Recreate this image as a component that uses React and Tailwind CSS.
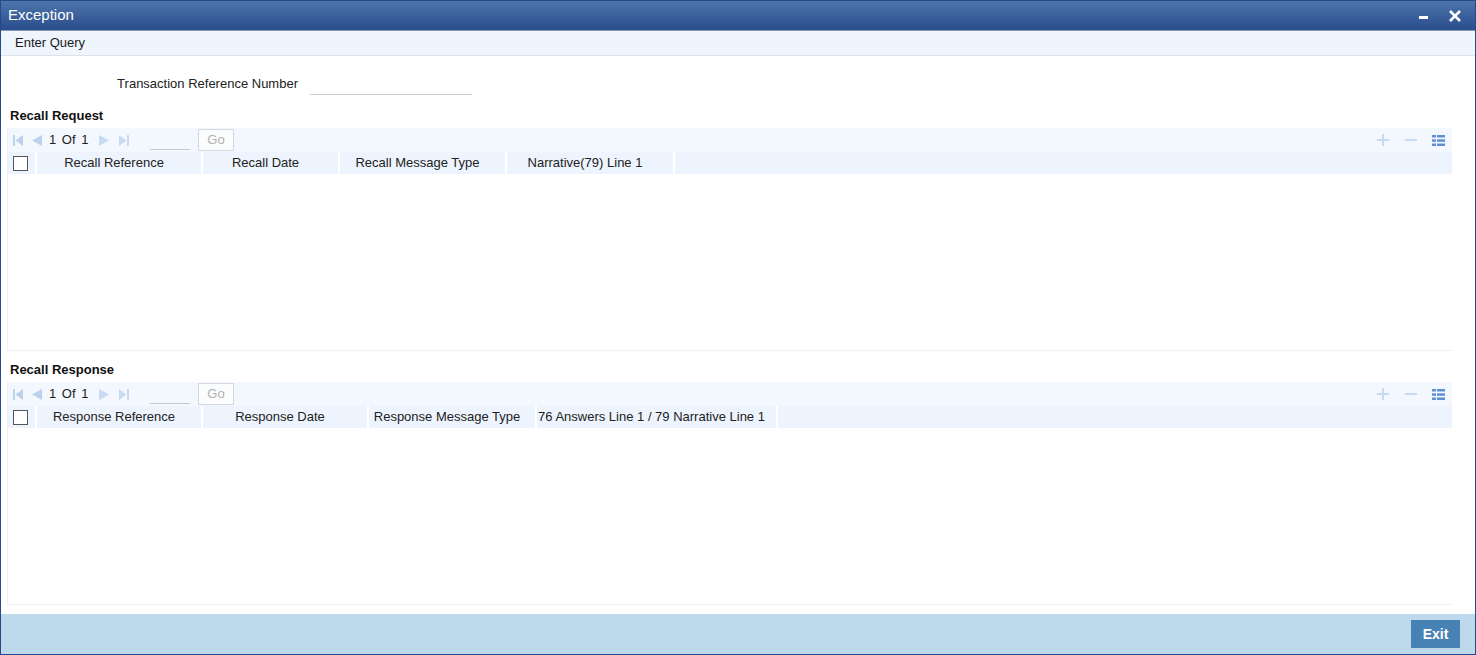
import React from "react";

const font = { fontFamily: '"Liberation Sans", Arial, sans-serif' };

function FirstIcon() {
  return (
    <svg width="10" height="11" viewBox="0 0 10 11">
      <rect x="0" y="0" width="2" height="11" fill="#bcd1ec" />
      <polygon points="10,0 2.5,5.5 10,11" fill="#bcd1ec" />
    </svg>
  );
}

function PrevIcon() {
  return (
    <svg width="10" height="11" viewBox="0 0 10 11">
      <polygon points="10,0 0,5.5 10,11" fill="#bcd1ec" />
    </svg>
  );
}

function NextIcon() {
  return (
    <svg width="10" height="11" viewBox="0 0 10 11">
      <polygon points="0,0 10,5.5 0,11" fill="#c8dbf2" />
    </svg>
  );
}

function LastIcon() {
  return (
    <svg width="10" height="11" viewBox="0 0 10 11">
      <polygon points="0,0 7.5,5.5 0,11" fill="#c8dbf2" />
      <rect x="8" y="0" width="2" height="11" fill="#c8dbf2" />
    </svg>
  );
}

function PlusIcon() {
  return (
    <svg width="12" height="12" viewBox="0 0 12 12">
      <rect x="0" y="5" width="12" height="2" fill="#c9dbf1" />
      <rect x="5" y="0" width="2" height="12" fill="#c9dbf1" />
    </svg>
  );
}

function MinusIcon() {
  return (
    <svg width="12" height="12" viewBox="0 0 12 12">
      <rect x="0" y="5" width="12" height="2" fill="#c9dbf1" />
    </svg>
  );
}

function ListIcon() {
  return (
    <svg width="13" height="11" viewBox="0 0 13 11">
      <rect x="0" y="0" width="4" height="2.5" fill="#5f8fd2" />
      <rect x="5" y="0" width="8" height="2.5" fill="#5f8fd2" />
      <rect x="0" y="4.3" width="4" height="2.5" fill="#5f8fd2" />
      <rect x="5" y="4.3" width="8" height="2.5" fill="#5f8fd2" />
      <rect x="0" y="8.5" width="4" height="2.5" fill="#5f8fd2" />
      <rect x="5" y="8.5" width="8" height="2.5" fill="#5f8fd2" />
    </svg>
  );
}

function Toolbar() {
  return (
    <div className="h-[24px] bg-[#f3f8fe] flex items-center text-[13px] text-[#222]">
      <div className="ml-[5px] w-[10px] flex"><FirstIcon /></div>
      <div className="ml-[9px] w-[10px] flex"><PrevIcon /></div>
      <span className="ml-[7px] w-[39px] whitespace-nowrap [word-spacing:2px]">1 Of 1</span>
      <div className="ml-[11px] w-[10px] flex"><NextIcon /></div>
      <div className="ml-[10px] w-[10px] flex"><LastIcon /></div>
      <div className="ml-[21px] w-[40px] h-[22px] border-b border-[#c8c8c8] self-start" />
      <div className="ml-[8px] w-[36px] h-[22px] border border-[#d4d8de] bg-[#fafcfe] text-[#b0b0b0] text-[13px] flex items-center justify-center self-start mt-[1px]">
        Go
      </div>
      <div className="ml-auto flex items-center">
        <div className="w-[12px] flex"><PlusIcon /></div>
        <div className="ml-[16px] w-[12px] flex"><MinusIcon /></div>
        <div className="ml-[15px] w-[13px] flex"><ListIcon /></div>
        <div className="w-[7px]" />
      </div>
    </div>
  );
}

function HeaderRow({ columns }) {
  return (
    <div className="h-[22px] bg-[#edf4fd] flex items-stretch text-[13px] text-[#222]">
      <div className="w-[29px] flex items-center pl-[5px] border-r-2 border-white">
        <div className="w-[15px] h-[15px] border border-[#555] bg-white" />
      </div>
      {columns.map((c) => (
        <div
          key={c.label}
          className="flex items-center justify-center pr-[10px] border-r-2 border-white whitespace-nowrap"
          style={{ width: c.width }}
        >
          {c.label}
        </div>
      ))}
    </div>
  );
}

function GridPanel({ columns }) {
  return (
    <div className="ml-[6px] w-[1445px] h-[223px] border-l border-b border-[#eef1f8]">
      <Toolbar />
      <HeaderRow columns={columns} />
    </div>
  );
}

export default function App() {
  const requestCols = [
    { label: "Recall Reference", width: 166 },
    { label: "Recall Date", width: 137 },
    { label: "Recall Message Type", width: 167 },
    { label: "Narrative(79) Line 1", width: 168 },
  ];
  const responseCols = [
    { label: "Response Reference", width: 166 },
    { label: "Response Date", width: 166 },
    { label: "Response Message Type", width: 168 },
    { label: "76 Answers Line 1 / 79 Narrative Line 1", width: 241 },
  ];

  return (
    <div style={font} className="w-[1476px] h-[655px] border border-[#26498a] flex flex-col bg-white">
      <div className="h-[30px] bg-gradient-to-b from-[#4e75ab] to-[#294d8d] border-b border-[#7f9aa8] flex items-center px-[7px] text-white text-[15px]">
        <span>Exception</span>
        <div className="ml-auto flex items-center">
          <div className="w-[9px] h-[3px] bg-white mt-[3px]" />
          <svg className="ml-[21px] mr-[7px]" width="12" height="12" viewBox="0 0 12 12">
            <path d="M1 1 L11 11 M11 1 L1 11" stroke="#fff" strokeWidth="2.6" />
          </svg>
        </div>
      </div>
      <div className="h-[25px] bg-[#eef5fd] border-b border-[#dfe3e8] flex items-center pl-[14px] text-[13px] text-[#1a1a1a]">
        Enter Query
      </div>
      <div className="flex-1 flex flex-col">
        <div className="mt-[17px] h-[22px] flex items-center text-[13px] text-[#222]">
          <div className="w-[297px] text-right">Transaction Reference Number</div>
          <div className="ml-[12px] w-[162px] h-[22px] border-b border-[#cfcfcf]" />
        </div>
        <div className="mt-[11px] h-[20px] flex items-center pl-[9px] text-[13px] font-bold text-[#111]">
          Recall Request
        </div>
        <div className="mt-[2px]">
          <GridPanel columns={requestCols} />
        </div>
        <div className="mt-[9px] h-[20px] flex items-center pl-[9px] text-[13px] font-bold text-[#111]">
          Recall Response
        </div>
        <div className="mt-[2px]">
          <GridPanel columns={responseCols} />
        </div>
      </div>
      <div className="h-[40px] bg-[#bed9ec] flex items-start justify-end pt-[6px] pr-[15px]">
        <div className="w-[49px] h-[28px] bg-[#4682b4] text-white text-[14px] font-bold flex items-center justify-center">
          Exit
        </div>
      </div>
    </div>
  );
}
